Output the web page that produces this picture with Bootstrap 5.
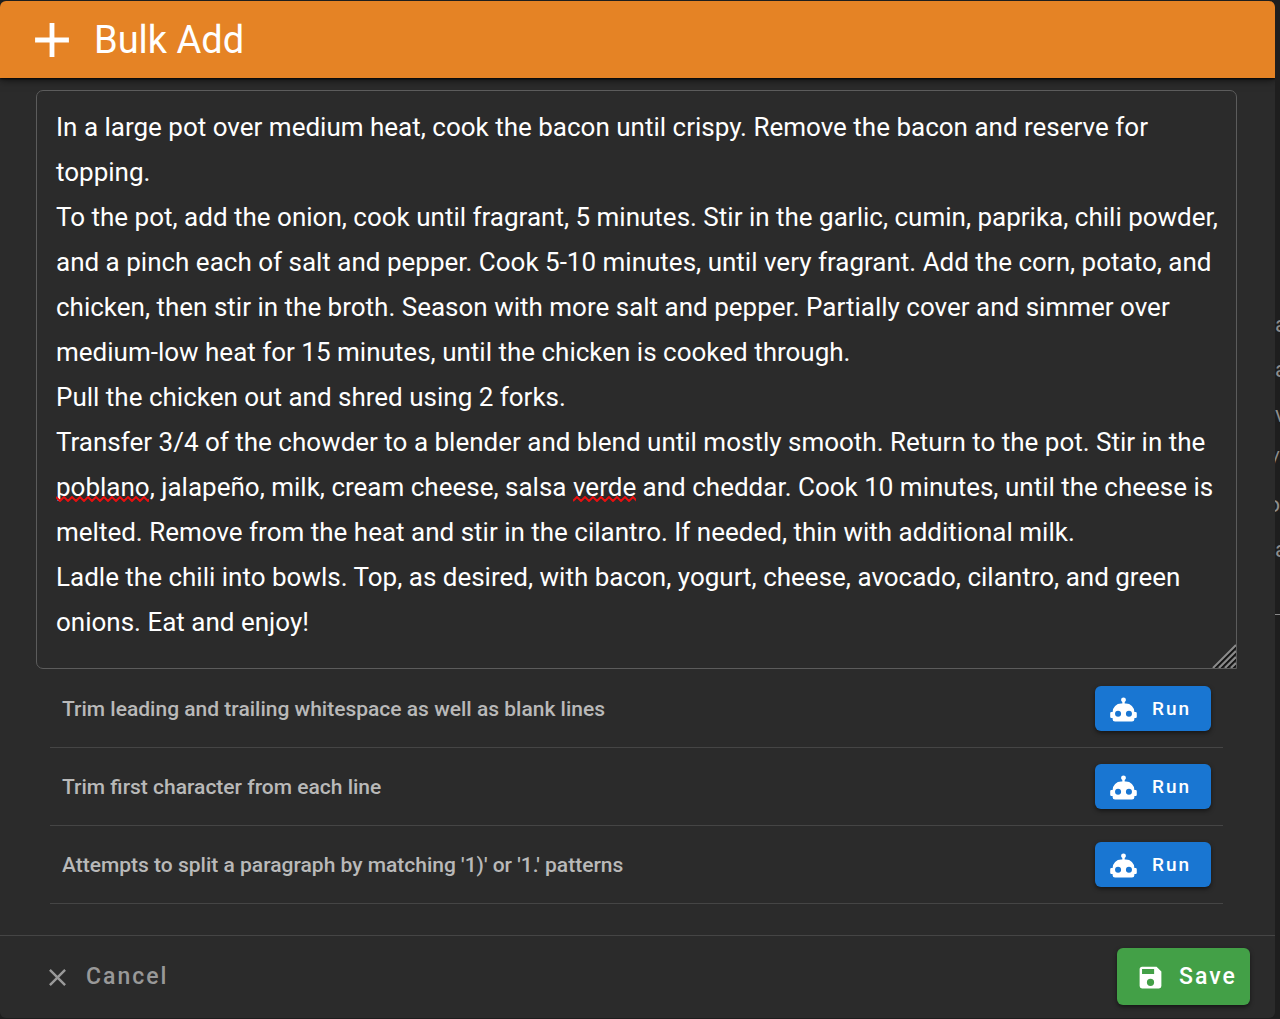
<!DOCTYPE html>
<html lang="en" data-bs-theme="dark">
<head>
<meta charset="utf-8">
<meta name="viewport" content="width=device-width, initial-scale=1">
<title>Bulk Add</title>
<link href="https://cdn.jsdelivr.net/npm/bootstrap@5.3.0/dist/css/bootstrap.min.css" rel="stylesheet">
<style>
  body { background: #1e1e1e; font-family: Roboto, "Noto Sans", sans-serif; color: #fff; }
  svg { fill: currentColor; flex: none; }
  .bulk-dialog { background: #2b2b2b; border-radius: 6px; overflow: hidden; margin: 1px 0; }
  .bulk-header { background: #e58325; height: 77px; padding: 0 23px; gap: 13px; box-shadow: 0 2px 8px rgba(0,0,0,.6), 0 1px 2px rgba(0,0,0,.8); }
  .bulk-header h1 { font-size: 38px; font-weight: 400; line-height: 48px; margin: 0; }
  .bulk-body { padding: 12px 38px 31px 36px; }
  .bulk-text { display: block; width: 100%; height: 579px; resize: none; overflow: hidden; background: transparent; color: #fff; border: 1px solid #5c5c5c; border-radius: 7px 7px 0 7px; padding: 14px 12px 14px 19px; font-size: 26px; line-height: 45px; }
  .bulk-text:focus { background: transparent; color: #fff; box-shadow: none; border-color: #888; }
  .grip { right: 1px; bottom: 1px; color: #8b8b8b; }
  .squiggle { height: 6px; color: #e81010; overflow: hidden; top: 406px; }
  .squiggle-a { left: 20px; width: 93px; }
  .squiggle-b { left: 537px; width: 63px; }
  .tool-list { margin: 0 14px; padding-top: 1px; }
  .tool-row { border-bottom: 1px solid #454545; padding: 16px 12px; font-size: 21px; line-height: 30px; font-weight: 500; color: #b9b9b9; }
  .btn-run, .btn-save { color: #fff; border: 0; border-radius: 6px; font-weight: 500; box-shadow: 0 2px 4px rgba(0,0,0,.5); }
  .btn-run { background: #1976d2; width: 116px; height: 45px; padding: 2px 14px 0; gap: 14px; font-size: 19px; letter-spacing: 2px; }
  .btn-run:hover { background: #1565c0; color: #fff; }
  .btn-save { background: #43a047; height: 57px; width: 133px; padding: 2px 19px 0; gap: 14px; font-size: 23px; letter-spacing: 2px; }
  .btn-save:hover { background: #388e3c; color: #fff; }
  .bulk-footer { border-top: 1px solid #454545; padding: 12px 25px 13px 36px; }
  .btn-cancel { color: #999; border: 0; padding: 2px 7px 0; gap: 14px; font-size: 23px; font-weight: 500; letter-spacing: 2px; height: 57px; }
  .page-edge { width: 5px; overflow: hidden; padding-top: 302px; color: #8d8d8d; font-size: 22px; line-height: 45px; white-space: nowrap; }
  .page-edge p { margin: 0; }
  .page-edge .line-end { direction: rtl; }
  .page-edge hr { margin: 42px 0 0; border-top: 1px solid #888; opacity: 1; }
</style>
<script src="https://cdn.jsdelivr.net/npm/bootstrap@5.3.0/dist/js/bootstrap.bundle.min.js"></script>
</head>
<body>
<svg class="d-none" aria-hidden="true">
  <symbol id="robot" viewBox="0 0 24 24"><path d="M12,2A2,2 0 0,1 14,4C14,4.74 13.6,5.39 13,5.73V7H14A7,7 0 0,1 21,14H22A1,1 0 0,1 23,15V18A1,1 0 0,1 22,19H21V20A2,2 0 0,1 19,22H5A2,2 0 0,1 3,20V19H2A1,1 0 0,1 1,18V15A1,1 0 0,1 2,14H3A7,7 0 0,1 10,7H11V5.73C10.4,5.39 10,4.74 10,4A2,2 0 0,1 12,2M7.5,13A2.5,2.5 0 0,0 5,15.5A2.5,2.5 0 0,0 7.5,18A2.5,2.5 0 0,0 10,15.5A2.5,2.5 0 0,0 7.5,13M16.5,13A2.5,2.5 0 0,0 14,15.5A2.5,2.5 0 0,0 16.5,18A2.5,2.5 0 0,0 19,15.5A2.5,2.5 0 0,0 16.5,13Z"/></symbol>
</svg>
<div class="d-flex">
  <main class="bulk-dialog flex-grow-1">
    <header class="bulk-header d-flex align-items-center position-relative">
      <svg width="58" height="58" viewBox="0 0 24 24" aria-hidden="true"><path d="M19,13H13V19H11V13H5V11H11V5H13V11H19V13Z"/></svg>
      <h1>Bulk Add</h1>
    </header>
    <div class="bulk-body">
      <div class="position-relative">
        <textarea class="form-control bulk-text" aria-label="Items to add" spellcheck="false">In a large pot over medium heat, cook the bacon until crispy. Remove the bacon and reserve for topping.
To the pot, add the onion, cook until fragrant, 5 minutes. Stir in the garlic, cumin, paprika, chili powder, and a pinch each of salt and pepper. Cook 5-10 minutes, until very fragrant. Add the corn, potato, and chicken, then stir in the broth. Season with more salt and pepper. Partially cover and simmer over medium-low heat for 15 minutes, until the chicken is cooked through.
Pull the chicken out and shred using 2 forks.
Transfer 3/4 of the chowder to a blender and blend until mostly smooth. Return to the pot. Stir in the poblano, jalapeño, milk, cream cheese, salsa verde and cheddar. Cook 10 minutes, until the cheese is melted. Remove from the heat and stir in the cilantro. If needed, thin with additional milk.
Ladle the chili into bowls. Top, as desired, with bacon, yogurt, cheese, avocado, cilantro, and green onions. Eat and enjoy!</textarea>
        <svg class="squiggle squiggle-a position-absolute" aria-hidden="true"><path fill="none" stroke="currentColor" stroke-width="2" d="M0,1L4,5L8,1L12,5L16,1L20,5L24,1L28,5L32,1L36,5L40,1L44,5L48,1L52,5L56,1L60,5L64,1L68,5L72,1L76,5L80,1L84,5L88,1L92,5L96,1"/></svg>
        <svg class="squiggle squiggle-b position-absolute" aria-hidden="true"><path fill="none" stroke="currentColor" stroke-width="2" d="M0,5L4,1L8,5L12,1L16,5L20,1L24,5L28,1L32,5L36,1L40,5L44,1L48,5L52,1L56,5L60,1L64,5"/></svg>
        <svg class="grip position-absolute" width="24" height="24" viewBox="0 0 24 24" aria-hidden="true"><path fill="none" stroke="#111" stroke-width="2" d="M3,24L24,3M9,24L24,9M15,24L24,15M21,24L24,21"/><path fill="none" stroke="currentColor" stroke-width="2" d="M1,24L24,1M7,24L24,7M13,24L24,13M19,24L24,19"/></svg>
      </div>
      <div class="tool-list">
        <div class="tool-row d-flex align-items-center justify-content-between"><span>Trim leading and trailing whitespace as well as blank lines</span>
          <button type="button" class="btn btn-run d-flex align-items-center"><svg width="29" height="29" aria-hidden="true"><use href="#robot"/></svg>Run</button></div>
        <div class="tool-row d-flex align-items-center justify-content-between"><span>Trim first character from each line</span>
          <button type="button" class="btn btn-run d-flex align-items-center"><svg width="29" height="29" aria-hidden="true"><use href="#robot"/></svg>Run</button></div>
        <div class="tool-row d-flex align-items-center justify-content-between"><span>Attempts to split a paragraph by matching '1)' or '1.' patterns</span>
          <button type="button" class="btn btn-run d-flex align-items-center"><svg width="29" height="29" aria-hidden="true"><use href="#robot"/></svg>Run</button></div>
      </div>
    </div>
    <footer class="bulk-footer d-flex align-items-center justify-content-between">
      <button type="button" class="btn btn-cancel d-flex align-items-center"><svg width="29" height="29" viewBox="0 0 24 24" aria-hidden="true"><path d="M19,6.41L17.59,5L12,10.59L6.41,5L5,6.41L10.59,12L5,17.59L6.41,19L12,13.41L17.59,19L19,17.59L13.41,12L19,6.41Z"/></svg>Cancel</button>
      <button type="button" class="btn btn-save d-flex align-items-center"><svg width="29" height="29" viewBox="0 0 24 24" aria-hidden="true"><path d="M15,9H5V5H15M12,19A3,3 0 0,1 9,16A3,3 0 0,1 12,13A3,3 0 0,1 15,16A3,3 0 0,1 12,19M17,3H5C3.89,3 3,3.9 3,5V19A2,2 0 0,0 5,21H19A2,2 0 0,0 21,19V7L17,3Z"/></svg>Save</button>
    </footer>
  </main>
  <aside class="page-edge" aria-hidden="true">
    <p>a</p><p>a</p><p>v</p><p class="line-end">/</p><p class="line-end">o</p><p>a</p>
    <hr>
  </aside>
</div>
</body>
</html>
